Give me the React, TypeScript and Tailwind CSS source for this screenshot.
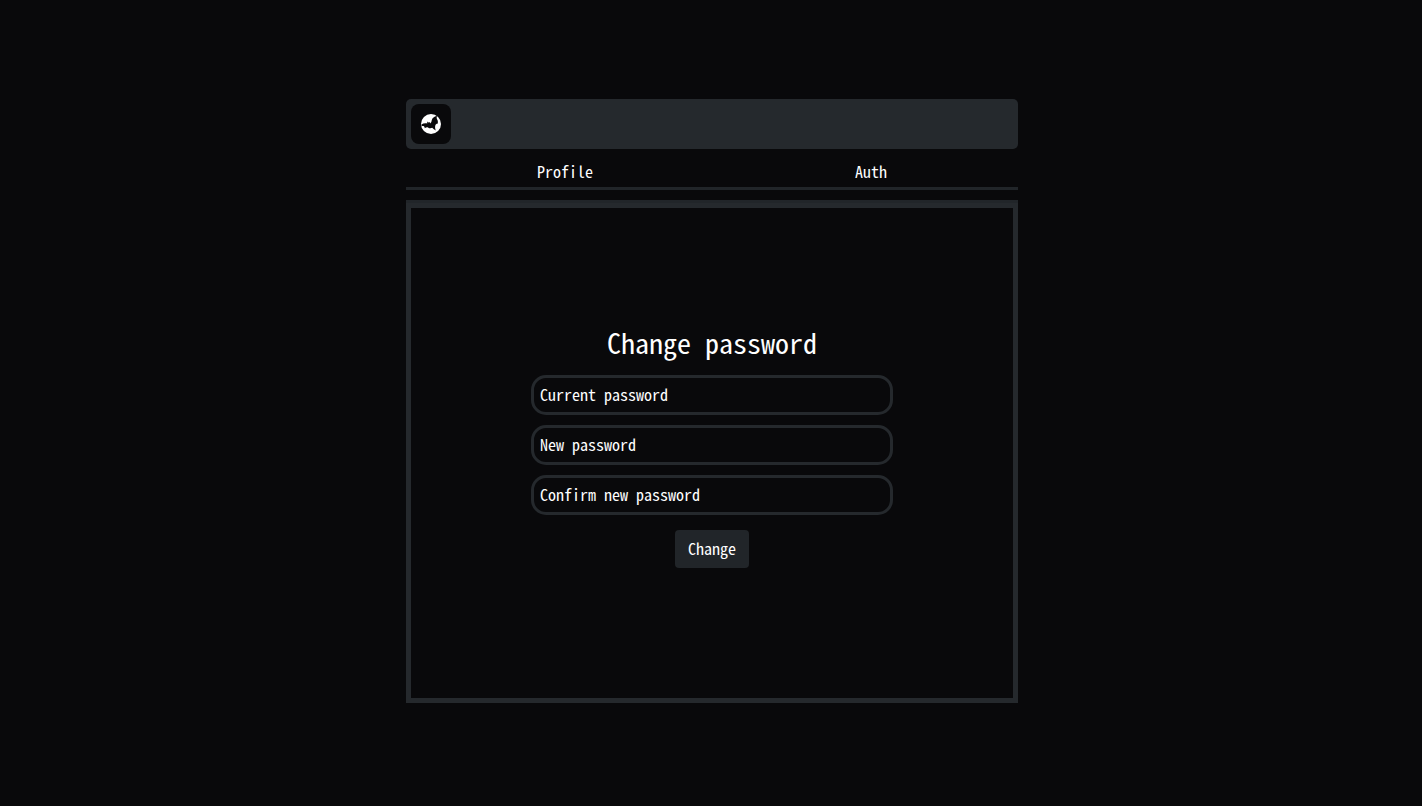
const tabs = [
  { label: "Profile", href: "#profile" },
  { label: "Auth", href: "#auth" },
];

const fields = [
  { id: "current-password", label: "Current password" },
  { id: "new-password", label: "New password" },
  { id: "confirm-password", label: "Confirm new password" },
];

function BatMoon() {
  return (
    <svg viewBox="0 0 20 20" className="size-5" aria-hidden="true">
      <circle cx="10" cy="10" r="10" fill="#ffffff" />
      <path
        d="M0.4 10.4C2 9.4 4.2 9 6.2 9.4L6.3 7.4L7.5 8.6L9 8.3L9.3 9.4C10.2 8.6 10.6 7.4 10.8 6C11.4 4 13 2.6 16 1.8C15.5 3.2 15.6 4.4 16.2 5.6C17 7 17.1 8.6 16.6 9.8C15.4 9.8 14.5 10.4 14.3 11.4C13.8 12.8 14.2 14.8 14.8 16.4C13.4 15.8 12.2 14.8 11.2 13.8C9.8 14.6 8.2 14.4 7 13.4C5.8 13.2 4.8 13.4 3.8 14.2C3.7 13.2 3.2 12.4 2.4 12C1.8 11.8 1.2 11.9 0.7 12.2Z"
        fill="#09090b"
      />
    </svg>
  );
}

function Header() {
  return (
    <header className="flex rounded-[5px] bg-[#25292d] p-[5px]">
      <a
        href="#home"
        aria-label="Home"
        className="flex size-10 items-center justify-center rounded-lg bg-[#09090b]"
      >
        <BatMoon />
      </a>
    </header>
  );
}

function Tabs() {
  return (
    <nav className="mt-2 grid grid-cols-2 border-b-[3px] border-[#212529] pt-0.5 pb-1">
      {tabs.map((tab) => (
        <a key={tab.label} href={tab.href} className="pl-3 text-center">
          {tab.label}
        </a>
      ))}
    </nav>
  );
}

function PasswordForm() {
  return (
    <form className="flex w-full max-w-[362px] flex-col gap-2.5">
      <h1 className="pb-1 text-center text-[28px] leading-[38px]">Change password</h1>
      {fields.map((field) => (
        <input
          key={field.id}
          id={field.id}
          type="password"
          aria-label={field.label}
          placeholder={field.label}
          className="h-10 w-full rounded-[15px] border-[3px] border-[#25292d] bg-transparent px-1.5 pb-0.5 placeholder:text-white placeholder:opacity-100"
        />
      ))}
      <button
        type="button"
        className="mt-[5px] mb-4 self-center rounded bg-[#212529] px-[13px] pt-1.5 pb-2"
      >
        Change
      </button>
    </form>
  );
}

export default function App() {
  return (
    <div className="flex min-h-screen justify-center bg-[#09090b] pt-[99px] pl-0.5 font-['Noto_Sans_Mono_CJK_JP','Noto_Sans_CJK_JP',monospace] text-base text-white antialiased">
      <div className="w-full max-w-[612px]">
        <Header />
        <Tabs />
        <main className="mt-2.5 border-t-[3px] border-[#212529]">
          <div className="flex min-h-[500px] items-center justify-center border-[5px] border-[#25292d]">
            <PasswordForm />
          </div>
        </main>
      </div>
    </div>
  );
}
